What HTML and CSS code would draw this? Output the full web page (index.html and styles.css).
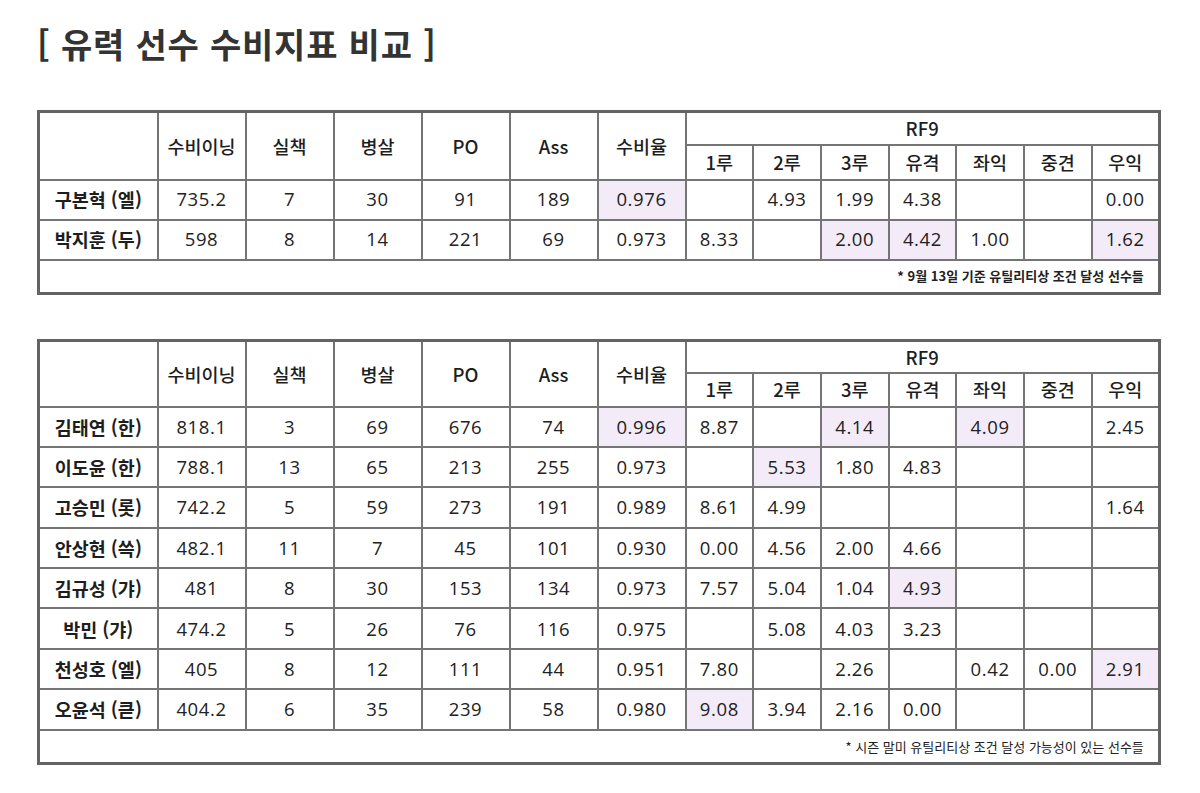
FILE: index.html
```html
<!DOCTYPE html>
<html lang="ko">
<head>
<meta charset="utf-8">
<link rel="stylesheet" href="styles.css">
</head>
<body>
<div class="page">
  <h1 class="title">[ 유력 선수 수비지표 비교 ]</h1>

  <table class="stats">
    <colgroup>
      <col class="c-name"><col class="c-std"><col class="c-std"><col class="c-std"><col class="c-std"><col class="c-std"><col class="c-std">
      <col class="c-rf"><col class="c-rf"><col class="c-rf"><col class="c-rf"><col class="c-rf"><col class="c-rf"><col class="c-rf">
    </colgroup>
    <thead>
      <tr class="h1">
        <th rowspan="2"></th><th rowspan="2">수비이닝</th><th rowspan="2">실책</th><th rowspan="2">병살</th><th rowspan="2">PO</th><th rowspan="2">Ass</th><th rowspan="2">수비율</th>
        <th colspan="7">RF9</th>
      </tr>
      <tr class="h2"><th>1루</th><th>2루</th><th>3루</th><th>유격</th><th>좌익</th><th>중견</th><th>우익</th></tr>
    </thead>
    <tbody>
      <tr><th>구본혁 (엘)</th><td>735.2</td><td>7</td><td>30</td><td>91</td><td>189</td><td class="hl">0.976</td><td></td><td>4.93</td><td>1.99</td><td>4.38</td><td></td><td></td><td>0.00</td></tr>
      <tr><th>박지훈 (두)</th><td>598</td><td>8</td><td>14</td><td>221</td><td>69</td><td>0.973</td><td>8.33</td><td></td><td class="hl">2.00</td><td class="hl">4.42</td><td>1.00</td><td></td><td class="hl">1.62</td></tr>
      <tr class="note"><td colspan="14" class="note-bold">* 9월 13일 기준 유틸리티상 조건 달성 선수들</td></tr>
    </tbody>
  </table>

  <table class="stats stats-long">
    <colgroup>
      <col class="c-name"><col class="c-std"><col class="c-std"><col class="c-std"><col class="c-std"><col class="c-std"><col class="c-std">
      <col class="c-rf"><col class="c-rf"><col class="c-rf"><col class="c-rf"><col class="c-rf"><col class="c-rf"><col class="c-rf">
    </colgroup>
    <thead>
      <tr class="h1">
        <th rowspan="2"></th><th rowspan="2">수비이닝</th><th rowspan="2">실책</th><th rowspan="2">병살</th><th rowspan="2">PO</th><th rowspan="2">Ass</th><th rowspan="2">수비율</th>
        <th colspan="7">RF9</th>
      </tr>
      <tr class="h2"><th>1루</th><th>2루</th><th>3루</th><th>유격</th><th>좌익</th><th>중견</th><th>우익</th></tr>
    </thead>
    <tbody>
      <tr><th>김태연 (한)</th><td>818.1</td><td>3</td><td>69</td><td>676</td><td>74</td><td class="hl">0.996</td><td>8.87</td><td></td><td class="hl">4.14</td><td></td><td class="hl">4.09</td><td></td><td>2.45</td></tr>
      <tr><th>이도윤 (한)</th><td>788.1</td><td>13</td><td>65</td><td>213</td><td>255</td><td>0.973</td><td></td><td class="hl">5.53</td><td>1.80</td><td>4.83</td><td></td><td></td><td></td></tr>
      <tr><th>고승민 (롯)</th><td>742.2</td><td>5</td><td>59</td><td>273</td><td>191</td><td>0.989</td><td>8.61</td><td>4.99</td><td></td><td></td><td></td><td></td><td>1.64</td></tr>
      <tr><th>안상현 (쓱)</th><td>482.1</td><td>11</td><td>7</td><td>45</td><td>101</td><td>0.930</td><td>0.00</td><td>4.56</td><td>2.00</td><td>4.66</td><td></td><td></td><td></td></tr>
      <tr><th>김규성 (갸)</th><td>481</td><td>8</td><td>30</td><td>153</td><td>134</td><td>0.973</td><td>7.57</td><td>5.04</td><td>1.04</td><td class="hl">4.93</td><td></td><td></td><td></td></tr>
      <tr><th>박민 (갸)</th><td>474.2</td><td>5</td><td>26</td><td>76</td><td>116</td><td>0.975</td><td></td><td>5.08</td><td>4.03</td><td>3.23</td><td></td><td></td><td></td></tr>
      <tr><th>천성호 (엘)</th><td>405</td><td>8</td><td>12</td><td>111</td><td>44</td><td>0.951</td><td>7.80</td><td></td><td>2.26</td><td></td><td>0.42</td><td>0.00</td><td class="hl">2.91</td></tr>
      <tr><th>오윤석 (큳)</th><td>404.2</td><td>6</td><td>35</td><td>239</td><td>58</td><td>0.980</td><td class="hl">9.08</td><td>3.94</td><td>2.16</td><td>0.00</td><td></td><td></td><td></td></tr>
      <tr class="note"><td colspan="14">* 시즌 말미 유틸리티상 조건 달성 가능성이 있는 선수들</td></tr>
    </tbody>
  </table>
</div>
</body>
</html>
```

FILE: styles.css
```css
html, body {
  margin: 0;
  padding: 0;
  background: #ffffff;
}

body {
  font-family: "Noto Sans CJK KR", "Noto Sans", sans-serif;
  color: #222222;
}

.page {
  padding: 19px 0 0 37px;
}

.title {
  margin: 0 0 41px 0;
  font-size: 34px;
  font-weight: 700;
  color: #333333;
  line-height: 50px;
  letter-spacing: 0.8px;
}

.stats {
  width: 1123px;
  table-layout: fixed;
  border-collapse: collapse;
  border: 3px solid #636363;
  margin-bottom: 44px;
}

.c-name { width: 119px; }
.c-std { width: 88px; }
.c-rf { width: 67.7px; }

.stats th,
.stats td {
  border: 2px solid #757575;
  padding: 0;
  text-align: center;
  vertical-align: middle;
  line-height: 1.2;
  white-space: nowrap;
}

.stats thead th {
  font-size: 18.5px;
  font-weight: 500;
  color: #1e1e1e;
}

.stats .h1 { height: 33px; }
.stats .h2 { height: 35px; }

.stats-long .h1 { height: 32px; }
.stats-long .h2 { height: 34px; }

.stats tbody tr { height: 40px; }
.stats-long tbody tr { height: 40.4px; }

.stats tbody th {
  font-size: 18.5px;
  font-weight: 700;
  color: #1e1e1e;
}

.stats tbody td {
  font-family: "Open Sans", "Noto Sans CJK KR", sans-serif;
  font-size: 18.5px;
  font-weight: 400;
  letter-spacing: 0.6px;
  color: #222222;
}

.stats .hl {
  background: #f4ebf8;
}

.stats tr.note,
.stats-long tr.note { height: 34px; }

.stats tr.note td {
  font-family: "Noto Sans CJK KR", sans-serif;
  text-align: right;
  padding-right: 14px;
  font-size: 13px;
  font-weight: 400;
  letter-spacing: 0;
}

.stats tr.note td.note-bold {
  font-weight: 700;
}
```
